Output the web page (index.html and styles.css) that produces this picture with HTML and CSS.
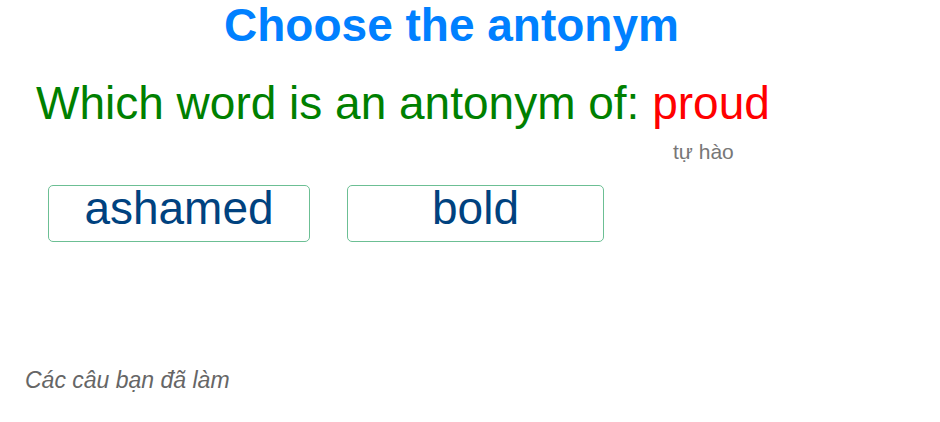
FILE: index.html
```html
<!DOCTYPE html>
<html lang="vi">
<head>
    <meta charset="UTF-8">
    <meta name="viewport" content="width=device-width, initial-scale=1.0">
    <title>Choose the antonym</title>
    <link rel="stylesheet" href="styles.css">
</head>
<body>
    <div class="quiz">
        <h1 class="quiz-title">Choose the antonym</h1>

        <div class="question">
            Which word is an antonym of: <span class="keyword">proud</span>
        </div>
        <div class="hint">tự hào</div>

        <div class="answers">
            <div class="answer-btn">ashamed</div>
            <div class="answer-btn">bold</div>
        </div>

        <div class="history">Các câu bạn đã làm</div>
    </div>
</body>
</html>
```

FILE: styles.css
```css
* {
    box-sizing: border-box;
    margin: 0;
    padding: 0;
}

body {
    font-family: "Liberation Sans", Arial, sans-serif;
    background: white;
}

.quiz {
    width: 903px;
    padding: 0 8px;
}

.quiz-title {
    color: #0080ff;
    font-size: 46px;
    line-height: 50px;
    font-weight: bold;
    text-align: center;
}

.question {
    margin-top: 30px;
    padding-left: 28px;
    color: #008000;
    font-size: 46px;
    line-height: 46px;
}

.keyword {
    color: #ff0000;
}

.hint {
    margin-top: 15px;
    margin-left: 665px;
    color: #777;
    font-size: 21px;
    line-height: 22px;
}

.answers {
    display: grid;
    grid-template-columns: 262px 257px;
    gap: 37px;
    margin-top: 22px;
    padding-left: 40px;
}

/* answer choices */
.answer-btn {
    height: 57px;
    padding-bottom: 10px;
    background: white;
    border: 1px solid #6cbf94;
    border-radius: 5px;
    color: #00427f;
    font-size: 46px;
    line-height: 45px;
    text-align: center;
    cursor: pointer;
}

.history {
    margin-top: 125px;
    padding-left: 17px;
    color: #666;
    font-size: 23px;
    line-height: 26px;
    font-style: italic;
}
```
